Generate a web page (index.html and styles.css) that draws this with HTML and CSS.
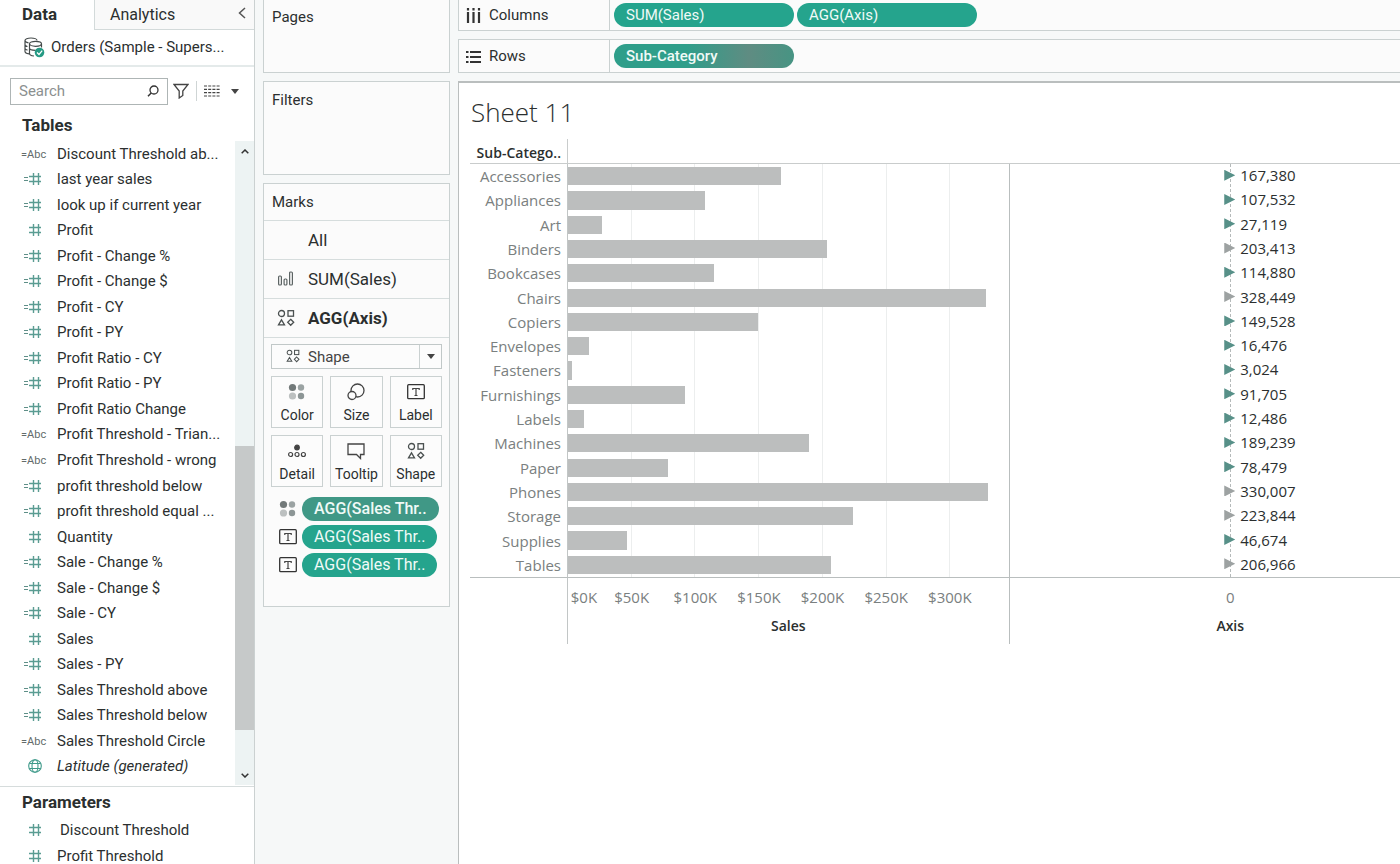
FILE: index.html
```html
<!DOCTYPE html>
<html lang="en">
<head>
<meta charset="utf-8">
<title>Sheet 11</title>
<link rel="stylesheet" href="styles.css">
</head>
<body>
<svg class="sprite" aria-hidden="true">
  <symbol id="num" viewBox="0 0 28 16"><path d="M13.5 2v12M18.5 2v12M9 5.500h12M9 10.500h12" fill="none" stroke="#5a9c92" stroke-width="1.400"/></symbol>
  <symbol id="calc" viewBox="0 0 28 16"><path d="M4 6.500h4M4 9.500h4" stroke="#5f8f88" stroke-width="1.200"/><path d="M13.500 2v12M18.500 2v12M9 5.500h12M9 10.500h12" fill="none" stroke="#5a9c92" stroke-width="1.400"/></symbol>
  <symbol id="globe" viewBox="0 0 28 16"><g fill="none" stroke="#3f9a8a" stroke-width="1.100"><circle cx="15" cy="8" r="6.300"/><ellipse cx="15" cy="8" rx="3" ry="6.300"/><path d="M9.500 5.500h11M9.500 10.500h11"/></g></symbol>
  <symbol id="shapes" viewBox="0 0 18 18"><g fill="none" stroke="#4a5050" stroke-width="1.300"><circle cx="4.500" cy="4.500" r="3"/><rect x="11" y="1.700" width="5.500" height="5.500"/><path d="M4.500 10.800l3 5h-6zM13.700 10.300l3 3-3 3-3-3z"/></g></symbol>
  <symbol id="colors" viewBox="0 0 18 18"><circle cx="4.500" cy="4.500" r="3.600" fill="#727979"/><circle cx="13" cy="4.500" r="3.200" fill="#9ba3a3"/><circle cx="4.500" cy="13" r="3.600" fill="#bcc0c0"/><circle cx="13" cy="13" r="3.200" fill="#8c9595"/></symbol>
  <symbol id="label" viewBox="0 0 18 18"><rect x=".7" y="1.700" width="16.600" height="14" rx="1" fill="none" stroke="#333" stroke-width="1.300"/><path d="M5.800 7V5.500h6.400V7M9 5.500v7M7.500 12.500h3" fill="none" stroke="#444" stroke-width="1.200"/></symbol>
</svg>
<div class="app">
  <aside class="data">
    <div class="tabs">
      <button class="tab on">Data</button>
      <div class="tab-rest"><button class="tab">Analytics</button>
        <button class="collapse" aria-label="Collapse"><svg width="8" height="12" viewBox="0 0 8 12"><path d="M7 1L1.500 6 7 11" fill="none" stroke="#555" stroke-width="1.500"/></svg></button></div>
    </div>
    <a class="source" href="#"><svg width="22" height="21" viewBox="0 0 22 21"><g fill="none" stroke="#454b4b" stroke-width="1.200"><path d="M13 3.500C13 2 10.500 1 7 1S1 2 1 3.500v11c0 1.200 1.500 2 4 2.300M1 3.500c0 1 1.300 1.900 3.500 2.300M1 7.500c0 1 1 1.600 2.500 2M1 11.200c0 1 1 1.500 2.500 1.900M5.500 7v9.500c0 1.300 2 2.300 4.500 2.500M5.500 11c0 1.300 2.500 2.300 6 2.300"/><ellipse cx="11.500" cy="6.800" rx="6" ry="2.500"/><path d="M17.500 7v3.500"/></g><circle cx="15.500" cy="15.500" r="4.800" fill="#259a84"/><path d="M13 15.500l2 2 3.200-3.800" fill="none" stroke="#fff" stroke-width="1.200"/></svg><span>Orders (Sample - Supers...</span></a>
    <div class="tools">
      <div class="search"><input type="text" placeholder="Search" aria-label="Search"><svg width="12" height="12" viewBox="0 0 12 12"><circle cx="7" cy="5" r="4" fill="none" stroke="#333" stroke-width="1.300"/><path d="M4.200 8L1 11.300" stroke="#333" stroke-width="1.500"/></svg></div>
      <button aria-label="Filter"><svg width="16" height="16" viewBox="0 0 16 16"><path d="M1 1.500h14L9.800 8v4.500L6.200 15V8z" fill="none" stroke="#444" stroke-width="1.300"/></svg></button>
      <span class="rule"></span>
      <button class="view" aria-label="View"><svg width="16" height="12" viewBox="0 0 16 12"><path d="M0 1h16M0 4.300h16M0 7.600h16M0 11h16" stroke="#444" stroke-width="1.200" stroke-dasharray="3 1.200"/></svg><svg width="8" height="5" viewBox="0 0 8 5"><path d="M0 0h8L4 5z" fill="#444"/></svg></button>
    </div>
    <h2>Tables</h2>
    <div class="scroll">
      <ul class="fields">
        <li><i>=Abc</i>Discount Threshold ab...</li>
        <li><svg><use href="#calc"/></svg>last year sales</li>
        <li><svg><use href="#calc"/></svg>look up if current year</li>
        <li><svg><use href="#num"/></svg>Profit</li>
        <li><svg><use href="#calc"/></svg>Profit - Change %</li>
        <li><svg><use href="#calc"/></svg>Profit - Change $</li>
        <li><svg><use href="#calc"/></svg>Profit - CY</li>
        <li><svg><use href="#calc"/></svg>Profit - PY</li>
        <li><svg><use href="#calc"/></svg>Profit Ratio - CY</li>
        <li><svg><use href="#calc"/></svg>Profit Ratio - PY</li>
        <li><svg><use href="#calc"/></svg>Profit Ratio Change</li>
        <li><i>=Abc</i>Profit Threshold - Trian...</li>
        <li><i>=Abc</i>Profit Threshold - wrong</li>
        <li><svg><use href="#calc"/></svg>profit threshold below</li>
        <li><svg><use href="#calc"/></svg>profit threshold equal ...</li>
        <li><svg><use href="#num"/></svg>Quantity</li>
        <li><svg><use href="#calc"/></svg>Sale - Change %</li>
        <li><svg><use href="#calc"/></svg>Sale - Change $</li>
        <li><svg><use href="#calc"/></svg>Sale - CY</li>
        <li><svg><use href="#num"/></svg>Sales</li>
        <li><svg><use href="#calc"/></svg>Sales - PY</li>
        <li><svg><use href="#calc"/></svg>Sales Threshold above</li>
        <li><svg><use href="#calc"/></svg>Sales Threshold below</li>
        <li><i>=Abc</i>Sales Threshold Circle</li>
        <li><svg><use href="#globe"/></svg><em>Latitude (generated)</em></li>
      </ul>
      <div class="bar">
        <button aria-label="Scroll up"><svg width="8" height="5" viewBox="0 0 8 5"><path d="M.7 4.300L4 1l3.300 3.300" fill="none" stroke="#333" stroke-width="1.500"/></svg></button>
        <div class="track"><span class="thumb"></span></div>
        <button aria-label="Scroll down"><svg width="8" height="5" viewBox="0 0 8 5"><path d="M.7.7L4 4 7.300.7" fill="none" stroke="#333" stroke-width="1.500"/></svg></button>
      </div>
    </div>
    <section class="params">
      <h2>Parameters</h2>
      <ul class="fields">
        <li class="inset"><svg><use href="#num"/></svg>Discount Threshold</li>
        <li><svg><use href="#num"/></svg>Profit Threshold</li>
      </ul>
    </section>
  </aside>

  <div class="cards">
    <section class="card pages"><h3>Pages</h3></section>
    <section class="card filters"><h3>Filters</h3></section>
    <section class="card marks">
      <h3>Marks</h3>
      <button class="layer"><span class="ico"></span>All</button>
      <button class="layer"><svg class="ico" viewBox="0 0 18 18"><g fill="none" stroke="#5c6464" stroke-width="1.200"><rect x="1.600" y="6" width="2.800" height="9" rx="1"/><rect x="7.100" y="9" width="2.800" height="6" rx="1"/><rect x="12.600" y="2" width="2.800" height="13" rx="1"/></g></svg>SUM(Sales)</button>
      <button class="layer on"><svg class="ico"><use href="#shapes"/></svg>AGG(Axis)</button>
      <div class="body">
        <div class="pick">
          <svg class="pick-ico"><use href="#shapes"/></svg>
          <select aria-label="Mark type"><option>Shape</option></select>
          <span class="drop"><svg width="8" height="5" viewBox="0 0 8 5"><path d="M0 0h8L4 5z" fill="#444"/></svg></span>
        </div>
        <div class="props">
          <button><svg class="ico"><use href="#colors"/></svg>Color</button>
          <button><svg class="ico" viewBox="0 0 18 18"><g stroke="#444" stroke-width="1.300"><circle cx="10.500" cy="7.500" r="6.500" fill="none"/><circle cx="5" cy="12.500" r="4" fill="#fcfcfc"/></g></svg>Size</button>
          <button><svg class="ico"><use href="#label"/></svg>Label</button>
          <button><svg class="ico" viewBox="0 0 18 18"><g fill="none" stroke="#444" stroke-width="1.200"><circle cx="9" cy="5.500" r="2.300" fill="#444"/><circle cx="2.600" cy="12.500" r="2"/><circle cx="9" cy="12.500" r="2"/><circle cx="15.400" cy="12.500" r="2"/></g></svg>Detail</button>
          <button><svg class="ico" viewBox="0 0 18 18"><path d="M1 2h16v10.500h-3.500V16.500L9.500 12.500H1z" fill="none" stroke="#444" stroke-width="1.300"/></svg>Tooltip</button>
          <button><svg class="ico"><use href="#shapes"/></svg>Shape</button>
        </div>
        <ul class="encodings">
          <li><svg class="ico"><use href="#colors"/></svg><button class="pill mixed">AGG(Sales Thr..</button></li>
          <li><svg class="ico"><use href="#label"/></svg><button class="pill">AGG(Sales Thr..</button></li>
          <li><svg class="ico"><use href="#label"/></svg><button class="pill">AGG(Sales Thr..</button></li>
        </ul>
      </div>
    </section>
  </div>

  <main class="work">
    <div class="shelf top">
      <div class="name"><svg width="15" height="15" viewBox="0 0 15 15"><path d="M2 0v2.500M2 4v11M7.500 0v2.500M7.500 4v11M13 0v2.500M13 4v11" stroke="#333" stroke-width="2.200"/></svg>Columns</div>
      <div class="drops"><button class="pill">SUM(Sales)</button><button class="pill">AGG(Axis)</button></div>
    </div>
    <div class="shelf">
      <div class="name"><svg width="15" height="15" viewBox="0 0 15 15"><path d="M0 3h2.500M4 3h11M0 8h2.500M4 8h11M0 13h2.500M4 13h11" stroke="#333" stroke-width="2.200"/></svg>Rows</div>
      <div class="drops"><button class="pill mixed">Sub-Category</button></div>
    </div>
    <section class="sheet">
      <h1>Sheet 11</h1>
      <div class="viz">
        <div class="corner">Sub-Catego..</div><div class="head"></div><div class="head"></div>
        <ul class="names">
          <li>Accessories</li><li>Appliances</li><li>Art</li><li>Binders</li><li>Bookcases</li><li>Chairs</li><li>Copiers</li><li>Envelopes</li><li>Fasteners</li><li>Furnishings</li><li>Labels</li><li>Machines</li><li>Paper</li><li>Phones</li><li>Storage</li><li>Supplies</li><li>Tables</li>
        </ul>
        <ul class="bars">
          <li style="--v:167380"></li><li style="--v:107532"></li><li style="--v:27119"></li><li style="--v:203413"></li><li style="--v:114880"></li><li style="--v:328449"></li><li style="--v:149528"></li><li style="--v:16476"></li><li style="--v:3024"></li><li style="--v:91705"></li><li style="--v:12486"></li><li style="--v:189239"></li><li style="--v:78479"></li><li style="--v:330007"></li><li style="--v:223844"></li><li style="--v:46674"></li><li style="--v:206966"></li>
        </ul>
        <ul class="points">
          <li>167,380</li><li>107,532</li><li>27,119</li><li class="high">203,413</li><li>114,880</li><li class="high">328,449</li><li>149,528</li><li>16,476</li><li>3,024</li><li>91,705</li><li>12,486</li><li>189,239</li><li>78,479</li><li class="high">330,007</li><li class="high">223,844</li><li>46,674</li><li class="high">206,966</li>
        </ul>
        <div class="foot"></div>
        <div class="axis">
          <div class="ticks"><span>$0K</span><span>$50K</span><span>$100K</span><span>$150K</span><span>$200K</span><span>$250K</span><span>$300K</span></div>
          <div class="title">Sales</div>
        </div>
        <div class="axis">
          <div class="ticks one"><span>0</span></div>
          <div class="title">Axis</div>
        </div>
      </div>
    </section>
  </main>
</div>
</body>
</html>
```
FILE: styles.css
```css
* { box-sizing: border-box; }
body { margin: 0; background: #f6f8f8; color: #2b2f2f; font: 15px/20px Roboto, "Liberation Sans", sans-serif; overflow: hidden; }
ul { list-style: none; margin: 0; padding: 0; }
h1, h2, h3 { margin: 0; font-weight: 400; }
button { font: inherit; color: inherit; background: none; border: 0; padding: 0; margin: 0; white-space: nowrap; }
svg { display: block; flex: none; }
.sprite { position: absolute; width: 0; height: 0; }
.app { display: grid; grid-template-columns: 255px 203px minmax(0, 1fr); height: 100vh; }

/* data pane */
.data { display: flex; flex-direction: column; min-height: 0; background: #fff; border-right: 1px solid #cbd1d1; overflow: hidden; }
.tabs { display: flex; height: 30px; flex: none; font-size: 16px; }
.tab { padding: 0 0 0 15px; text-align: left; }
.tab.on { width: 94px; padding: 0 0 2px 22px; font-size: 17px; font-weight: 700; }
.tab-rest { flex: 1; display: flex; justify-content: space-between; background: #f9f9f9; border-left: 1px solid #d3dada; border-bottom: 1px solid #d3dada; }
.collapse { padding: 0 8px 4px 0; }
.source { display: flex; align-items: center; gap: 5px; height: 37px; flex: none; padding-left: 24px; padding-bottom: 1px; border-bottom: 2px solid #e4eaea; color: inherit; text-decoration: none; }
.tools { display: flex; align-items: center; height: 26px; flex: none; margin: 11px 15px 0 10px; }
.search { display: flex; align-items: center; width: 158px; height: 27px; padding: 0 8px; border: 1px solid #aeb5b5; margin-right: 5px; }
.search input { flex: 1; min-width: 0; border: 0; padding: 0; font: inherit; color: #333; outline: 0; background: none; }
.search input::placeholder { color: #8b9090; opacity: 1; }
.rule { width: 1px; height: 20px; background: #cfd5d5; margin: 0 7px; }
.view { display: flex; align-items: center; gap: 11px; }
h2 { font-size: 17px; font-weight: 700; padding-left: 22px; }
.data > h2 { margin: 11px 0 6px; flex: none; }
.scroll { flex: 1; min-height: 0; display: flex; border-bottom: 1px solid #d6dcdc; padding-bottom: 1px; }
.fields { flex: 1; display: grid; grid-auto-rows: 1fr; }
.scroll .fields { padding-bottom: 6px; }
.fields li { display: flex; align-items: center; padding-left: 20px; white-space: nowrap; }
.fields svg, .fields i { width: 28px; height: 16px; margin-right: 9px; flex: none; }
.fields i { font-style: normal; font-size: 11px; line-height: 18px; color: #626b6b; padding-left: 1px; }
.bar { width: 19px; display: flex; flex-direction: column; background: #edf3f3; }
.bar button { height: 20px; display: grid; place-items: center; }
.track { flex: 1; display: grid; grid-template-rows: 285fr 283fr 35fr; }
.thumb { grid-row: 2; background: #c6c9c9; }
.params { height: 77px; flex: none; overflow: hidden; }
.params h2 { padding-top: 5px; margin-bottom: 5px; }
.params .fields { grid-auto-rows: 26px; }
.params .inset svg { margin-right: 12px; }

/* cards */
.cards { display: flex; flex-direction: column; gap: 8px; padding: 0 8px; }
.card { background: #fbfbfb; border: 1px solid #cad1d1; flex: none; }
.card h3 { font-size: 15px; padding: 8px; }
.pages { height: 73px; border-top: 0; }
.pages h3 { padding-top: 7px; }
.filters { height: 94px; }
.layer { display: flex; align-items: center; gap: 13px; width: 100%; height: 39px; border-top: 1px solid #d6dddd; padding: 0 0 1px 13px; font-size: 17px; }
.layer.on { font-weight: 700; }
.ico { width: 18px; height: 18px; }
.body { border-top: 1px solid #d6dddd; padding: 6px 7px 29px; }
.pick { position: relative; height: 25px; }
.pick select { display: block; appearance: none; width: 100%; height: 25px; border: 1px solid #c1c8c8; border-radius: 0; background: #fcfcfc; font: inherit; color: #444; padding: 0 0 0 36px; }
.pick-ico { position: absolute; left: 15px; top: 5px; width: 14px; height: 14px; }
.drop { position: absolute; right: 0; top: 1px; width: 23px; height: 23px; border-left: 1px solid #cad1d1; display: grid; place-items: center; pointer-events: none; }
.props { display: grid; grid-template-columns: repeat(3, 1fr); gap: 7px; margin-top: 7px; }
.props button { height: 52px; border: 1px solid #cad1d1; background: #fcfcfc; display: flex; flex-direction: column; align-items: center; justify-content: center; gap: 4px; padding-top: 3px; font-size: 14px; }
.encodings { display: flex; flex-direction: column; gap: 4px; margin-top: 10px; }
.encodings li { display: flex; align-items: center; gap: 5px; padding: 0 5px 0 8px; }
.encodings .pill { flex: 1; font-size: 16px; }
.pill { height: 24px; border-radius: 12px; background: #25a48d; color: #f0faf7; padding: 0 12px; text-align: left; }
.pill.mixed { background: #409886; font-weight: 500; }

/* shelves */
.work { display: flex; flex-direction: column; min-width: 0; }
.shelf { display: flex; height: 34px; flex: none; margin-bottom: 8px; background: #fbfbfb; border: 1px solid #cad1d1; border-right: 0; }
.shelf.top { height: 31px; border-top: 0; }
.name { display: flex; align-items: center; gap: 8px; width: 151px; padding-left: 7px; border-right: 1px solid #cad1d1; }
.drops { display: flex; align-items: center; gap: 3px; padding-left: 4px; }
.drops .pill { width: 180px; }
.drops .mixed { background: linear-gradient(90deg, #2f9e8a 40%, #5f8c82 75%, #479483); }

/* sheet */
.sheet { flex: 1; min-height: 0; background: #fff; border-top: 2px solid #babebe; border-left: 1px solid #babebe; overflow: hidden; font-family: "Open Sans", "Noto Sans", sans-serif; }
h1 { font-size: 26px; line-height: 34px; font-weight: 300; padding: 12px 12px 10px; }
.viz { display: grid; grid-template-columns: 98px 1fr 1fr; grid-template-rows: 25px 414px 66px; margin: 0 -51px 0 11px; }
.corner { text-align: right; padding-right: 6px; line-height: 28px; font-size: 14px; font-weight: 600; border-bottom: 1px solid #c9cccc; border-right: 1px solid #c9cccc; }
.head { border-bottom: 1px solid #c9cccc; }
.names, .bars, .points { display: grid; grid-auto-rows: 1fr; align-items: center; border-bottom: 1px solid #b9bebe; }
.names, .foot { border-right: 1px solid #c2c6c6; }
.names { text-align: right; padding-right: 6px; font-size: 15px; color: #7a8080; }
.bars { background: repeating-linear-gradient(to right, transparent 0 calc(14.45% - 1px), #eceeee calc(14.45% - 1px) 14.45%); }
.bars, .axis:not(:last-child) { border-right: 1px solid #b9bebe; }
.bars li { height: 75%; width: calc(var(--v) / 346500 * 100%); background: #bcbebe; }
.points { background: repeating-linear-gradient(to bottom, #b5baba 0 3px, transparent 3px 5px) 50% 0 / 1px 100% no-repeat; font-size: 15px; }
.points li { display: flex; align-items: center; gap: 5px; padding: 0 0 2px calc(50% - 6px); }
.points li::before { content: ""; width: 11px; height: 11px; background: #579088; clip-path: polygon(0 0, 100% 50%, 0 100%); }
.points .high::before { background: #9da2a2; }
.axis { padding-top: 9px; }
.ticks { display: flex; font-size: 15px; color: #7a8080; }
.ticks span { width: 14.45%; text-align: center; }
.ticks span:first-child { width: 7.225%; }
.ticks.one span:first-child { width: 100%; }
.title { text-align: center; font-size: 14px; font-weight: 600; margin-top: 9px; }
```
